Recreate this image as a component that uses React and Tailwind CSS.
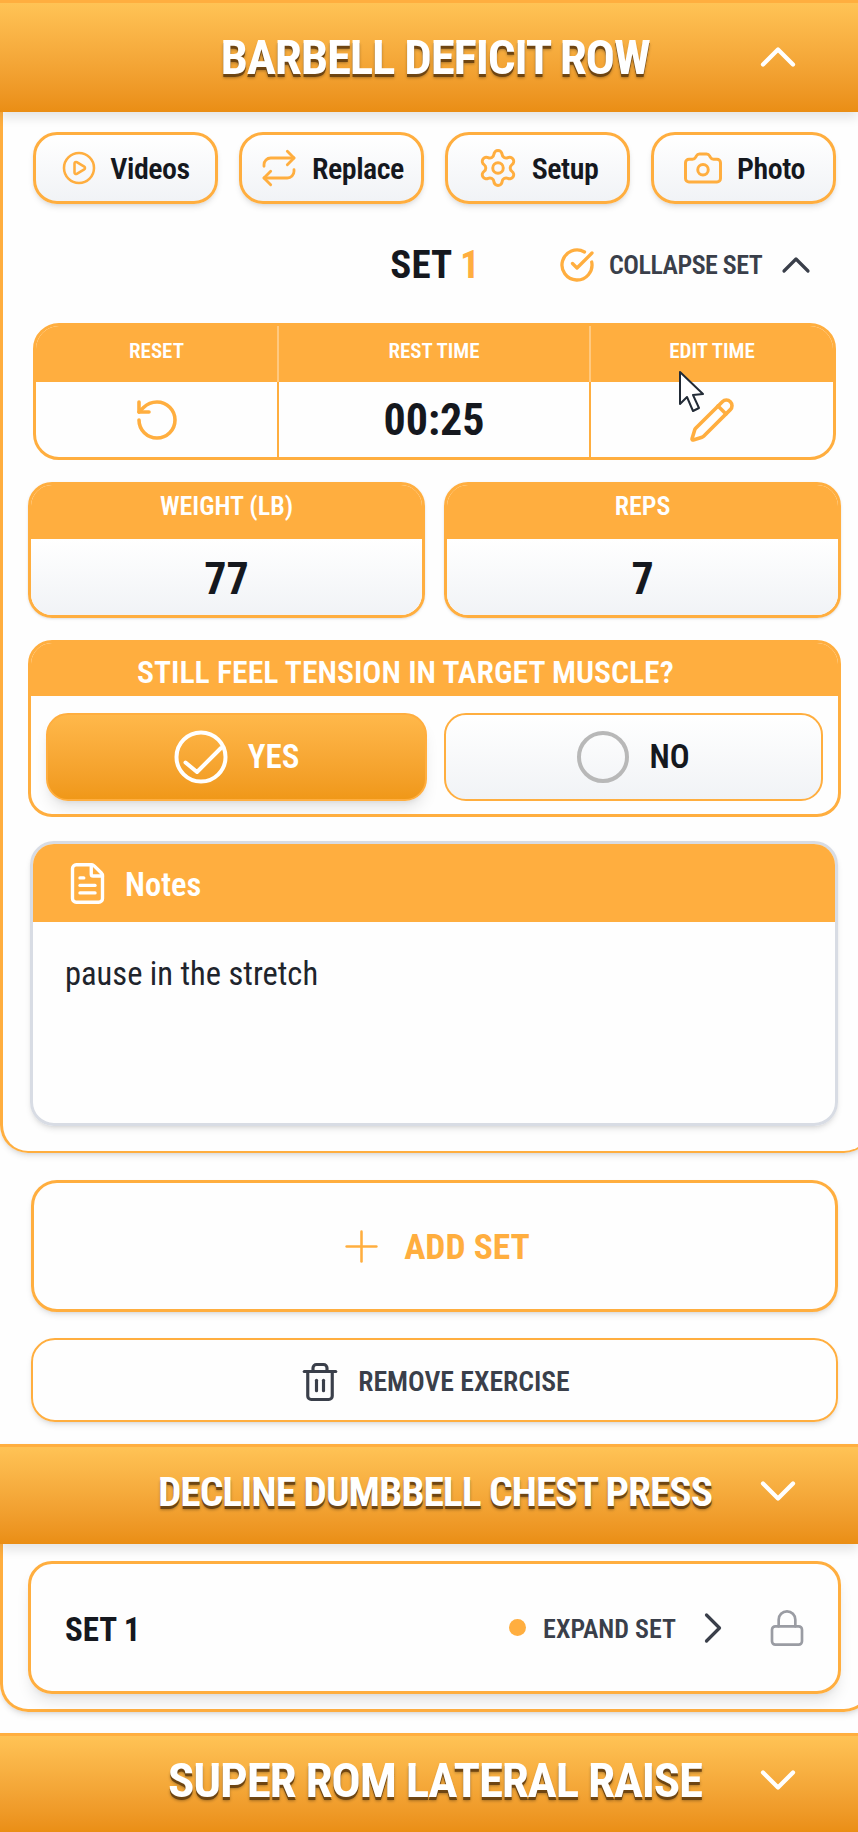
import React from 'react';
import {
  ChevronUp,
  ChevronDown,
  ChevronRight,
  CirclePlay,
  Repeat,
  Settings,
  Camera,
  CircleCheckBig,
  RotateCcw,
  Pencil,
  FileText,
  Plus,
  Trash2,
  Lock,
} from 'lucide-react';

const font = "font-['Roboto','Liberation_Sans',sans-serif] [font-stretch:75%]";

const ExerciseHeader = ({ title, open, size, className, chevronClass }) => {
  const Chevron = open ? ChevronUp : ChevronDown;
  return (
    <div className={`relative w-[858px] flex items-center justify-center bg-gradient-to-b from-[#ffc355] to-[#ea8e14] border-t-[3px] border-[#ffae3f] shadow-[0_6px_10px_rgba(0,0,0,.1)] ${className}`}>
      <h2 className={`${size} leading-none font-bold text-white tracking-tight ml-[12px] [text-shadow:0_3px_0_#6e4512,0_4px_3px_rgba(0,0,0,.3)]`}>
        {title}
      </h2>
      <Chevron className={`absolute right-[50px] w-[60px] h-[60px] text-white ${chevronClass}`} strokeWidth={1.7} />
    </div>
  );
};

const ActionButton = ({ icon: Icon, label, iconClass, className = '' }) => (
  <button className={`h-[72px] w-[185px] flex items-center justify-center gap-[13px] rounded-[24px] border-[3px] border-[#ffae3f] bg-gradient-to-b from-white to-[#f1f3f6] shadow-md ${className}`}>
    <Icon className={`${iconClass} text-[#ffae3f]`} strokeWidth={1.7} />
    <span className="text-[30px] tracking-[-0.5px] font-semibold text-[#15181e]">{label}</span>
  </button>
);

const StatBox = ({ label, value }) => (
  <div className="flex-1 h-[136px] rounded-[24px] border-[3px] border-[#ffae3f] overflow-hidden shadow-sm">
    <div className="h-[54px] pb-3 bg-[#ffae3f] flex items-center justify-center text-white text-[26px] font-semibold">{label}</div>
    <div className="h-[76px] pt-1 bg-gradient-to-b from-white to-[#f1f3f6] flex items-center justify-center text-[44px] font-bold text-[#15181e]">{value}</div>
  </div>
);

export default function App() {
  return (
    <div className={`w-[858px] h-[1832px] overflow-hidden bg-[#fefefe] ${font}`}>
      {/* Open exercise */}
      <div className="w-[872px] h-[1153px] border-2 border-t-0 border-l-[3px] border-[#ffae3f] rounded-b-[28px] shadow-md">
        <div className="-ml-[3px]">
          <ExerciseHeader title="BARBELL DEFICIT ROW" open size="text-[49px]" className="h-[112px]" chevronClass="top-[24px]" />
        </div>

        <div className="flex gap-[21px] w-[803px] ml-[30px] mt-5">
          <ActionButton icon={CirclePlay} iconClass="w-9 h-9" label="Videos" />
          <ActionButton icon={Repeat} iconClass="w-10 h-10" label="Replace" />
          <ActionButton icon={Settings} iconClass="w-[42px] h-[42px]" label="Setup" />
          <ActionButton icon={Camera} iconClass="w-[42px] h-[42px]" label="Photo" />
        </div>

        <div className="relative h-[40px] mt-[41px] w-[858px] flex items-center justify-center">
          <span className="text-[39px] font-bold text-[#15181e] ml-[6px]">SET <span className="text-[#ffae3f]">1</span></span>
          <div className="absolute left-[556px] top-0 h-10 flex items-center">
            <CircleCheckBig className="w-9 h-9 text-[#ffae3f]" strokeWidth={2.2} />
            <span className="ml-[14px] text-[26px] tracking-[-0.5px] font-semibold text-[#3a3f4a]">COLLAPSE SET</span>
            <ChevronUp className="w-12 h-12 ml-[10px] text-[#3a3f4a]" strokeWidth={1.6} />
          </div>
        </div>

        {/* Rest timer */}
        <div className="mt-[38px] ml-[30px] w-[803px] h-[137px] rounded-[26px] border-[3px] border-[#ffae3f] overflow-hidden grid grid-cols-[243px_312px_1fr]">
          <div className="flex flex-col border-r-2 border-[#ffae3f]">
            <div className="h-[56px] pb-1 bg-[#ffae3f] border-r-2 border-[#ffc97f] -mr-[2px] flex items-center justify-center text-white text-[21px] font-semibold">RESET</div>
            <div className="flex-1 flex items-center justify-center"><RotateCcw className="w-12 h-12 text-[#ffae3f]" strokeWidth={1.8} /></div>
          </div>
          <div className="flex flex-col border-r-2 border-[#ffae3f]">
            <div className="h-[56px] pb-1 bg-[#ffae3f] border-r-2 border-[#ffc97f] -mr-[2px] flex items-center justify-center text-white text-[21px] font-semibold">REST TIME</div>
            <div className="flex-1 flex items-center justify-center text-[44px] font-bold text-[#15181e]">00:25</div>
          </div>
          <div className="relative flex flex-col">
            <div className="h-[56px] pb-1 bg-[#ffae3f] flex items-center justify-center text-white text-[21px] font-semibold">EDIT TIME</div>
            <div className="flex-1 flex items-center justify-center"><Pencil className="w-12 h-12 text-[#ffae3f]" strokeWidth={1.8} /></div>
            <svg className="absolute left-[87px] top-[44px] w-7 h-11" viewBox="0 0 28 44">
              <path d="M2 2 L2 34 L9 27 L15 41 L21 38 L15 25 L25 24 Z" fill="#fff" stroke="#222b36" strokeWidth="2" strokeLinejoin="round" />
            </svg>
          </div>
        </div>

        <div className="flex gap-[19px] ml-[25px] w-[813px] mt-[22px]">
          <StatBox label="WEIGHT (LB)" value="77" />
          <StatBox label="REPS" value="7" />
        </div>

        {/* Tension question */}
        <div className="ml-[25px] w-[813px] h-[177px] mt-[22px] rounded-[24px] border-[3px] border-[#ffae3f] overflow-hidden">
          <div className="h-[53px] pt-[6px] bg-[#ffae3f] flex items-center text-white text-[31.7px] font-semibold pl-[106px]">STILL FEEL TENSION IN TARGET MUSCLE?</div>
          <div className="flex gap-[17px] px-[15px] mt-[17px]">
            <div className="w-[381px] h-[88px] rounded-[22px] bg-gradient-to-b from-[#ffb84a] to-[#f09818] border-2 border-[#ffae3f] shadow-lg flex items-center justify-center gap-5 text-white text-[33px] font-semibold">
              <svg className="w-[54px] h-[54px]" viewBox="0 0 54 54" fill="none" stroke="currentColor" strokeWidth="4" strokeLinecap="round" strokeLinejoin="round">
                <circle cx="27" cy="27" r="24.5" />
                <path d="M11.5 32.5 23 42 47 18" />
              </svg>
              YES
            </div>
            <div className="w-[379px] h-[88px] rounded-[22px] bg-gradient-to-b from-white to-[#f1f3f6] border-2 border-[#ffae3f] flex items-center justify-center gap-5 text-[#15181e] text-[33px] font-semibold">
              <span className="w-[52px] h-[52px] rounded-full border-4 border-[#b8b8b8]" /> NO
            </div>
          </div>
        </div>

        {/* Notes */}
        <div className="ml-[27px] w-[808px] h-[285px] mt-[24px] rounded-[24px] border-[3px] border-[#d8dce4] overflow-hidden shadow-md">
          <div className="h-[78px] bg-[#ffae3f] flex items-center gap-[15px] pl-[32px] text-white text-[32.5px] font-semibold">
            <FileText className="w-[45px] h-[45px]" strokeWidth={1.8} /> <span className="mt-1">Notes</span>
          </div>
          <div className="pl-[32px] pt-[28px] text-[32.5px] text-[#20242c]">pause in the stretch</div>
        </div>
      </div>

      <div className="ml-[31px] w-[807px] h-[132px] mt-[27px] pr-[3px] rounded-[26px] border-[3px] border-[#ffae3f] flex items-center justify-center gap-[17px] text-[#ffae3f] text-[35.5px] font-bold shadow-md">
        <Plus className="w-[51px] h-[51px]" strokeWidth={1.2} /> <span className="mt-1">ADD SET</span>
      </div>
      <div className="ml-[31px] w-[807px] h-[84px] mt-[26px] pt-1 rounded-[24px] border-2 border-[#ffae3f] flex items-center justify-center gap-[17px] text-[#3a3f4a] text-[27.7px] font-semibold shadow-md">
        <Trash2 className="w-[42px] h-[42px]" strokeWidth={1.8} /> REMOVE EXERCISE
      </div>

      {/* Collapsed exercises */}
      <div className="w-[872px] h-[268px] mt-[22px] border-b-[3px] border-l-[3px] border-r-[3px] border-[#ffae3f] rounded-b-[28px] shadow-md">
        <div className="-ml-[3px]">
          <ExerciseHeader title="DECLINE DUMBBELL CHEST PRESS" size="text-[41.5px]" className="h-[100px] pb-2" chevronClass="top-[14px]" />
        </div>
        <div className="ml-[25px] w-[813px] h-[133px] mt-[17px] rounded-[24px] border-[3px] border-[#ffae3f] shadow-lg flex items-center pl-[34px] pr-[31px]">
          <span className="mt-1 text-[33px] font-bold text-[#15181e]">SET 1</span>
          <span className="ml-auto w-[17px] h-[17px] rounded-full bg-[#ffae3f]" />
          <span className="mt-1 ml-[17px] text-[26px] font-semibold text-[#3a3f4a]">EXPAND SET</span>
          <ChevronRight className="ml-[11px] w-[52px] h-[52px] text-[#3a3f4a]" strokeWidth={1.5} />
          <Lock className="ml-[28px] w-10 h-10 text-[#9a9ca3]" strokeWidth={1.6} />
        </div>
      </div>

      <div className="mt-[21px]">
        <ExerciseHeader title="SUPER ROM LATERAL RAISE" size="text-[49px]" className="h-[100px] pb-2" chevronClass="top-[14px]" />
      </div>
    </div>
  );
}
